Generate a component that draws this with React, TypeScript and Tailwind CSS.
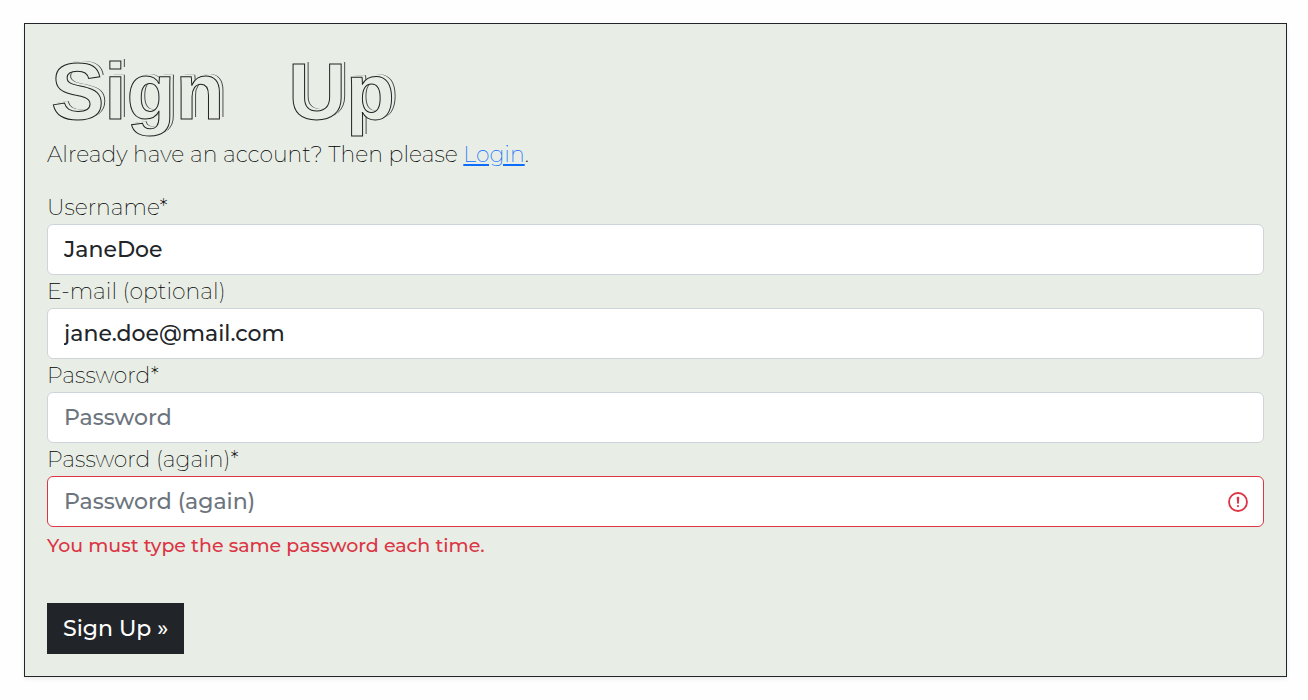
import { useState } from "react";

type FieldProps = {
  id: string;
  label: string;
  type: string;
  initial?: string;
  placeholder?: string;
  error?: string;
};

function AlertIcon() {
  return (
    <svg
      viewBox="0 0 12 12"
      className="pointer-events-none absolute right-[15px] top-1/2 size-[22px] -translate-y-1/2"
      fill="none"
      stroke="#dc3545"
      aria-hidden="true"
    >
      <circle cx="6" cy="6" r="4.9" />
      <path strokeLinejoin="round" d="M5.8 3.6h.4L6 6.5z" />
      <circle cx="6" cy="8.2" r=".6" fill="#dc3545" stroke="none" />
    </svg>
  );
}

function Field({ id, label, type, initial = "", placeholder, error }: FieldProps) {
  const [value, setValue] = useState(initial);
  return (
    <div>
      <label htmlFor={id} className="block text-[22px] leading-[33px] font-extralight text-black">
        {label}
      </label>
      <div className="relative">
        <input
          id={id}
          name={id}
          type={type}
          value={value}
          placeholder={placeholder}
          aria-invalid={error ? true : undefined}
          aria-describedby={error ? `${id}-error` : undefined}
          onChange={(event) => setValue(event.target.value)}
          className={`block w-full rounded-md border bg-white px-4 py-2 text-[22px] leading-[33px] font-medium text-[#212529] placeholder:text-[#6c757d] ${
            error ? "border-[#dc3545]" : "border-[#ced4da]"
          }`}
        />
        {error && <AlertIcon />}
      </div>
      {error && (
        <p id={`${id}-error`} className="mt-1 text-[19px] leading-[30px] font-medium text-[#dc3545]">
          {error}
        </p>
      )}
    </div>
  );
}

export default function App() {
  return (
    <div className="min-h-screen bg-[#fefefe] py-[23px] pr-[21px] pl-6 font-['Montserrat','Inter',sans-serif] text-[#212529]">
      <main className="border border-[#212529] bg-[#e8eee6] p-[22px] shadow-[0_2px_4px_rgba(0,0,0,0.08)]">
        <h1 className="flex h-[92px] gap-16 pl-1 font-['Liberation_Sans',sans-serif] text-[80px] leading-[92px] font-bold text-[#e8eee6] [-webkit-text-stroke:1px_#222] [text-shadow:1px_-1px_0_#e8eee6,2px_-1px_0_#e8eee6,3px_-2px_0_#e8eee6,4px_-2px_0_#444]">
          <span>Sign</span> <span>Up</span>
        </h1>
        <p className="text-[22px] leading-[33px] font-extralight text-black">
          Already have an account? Then please{" "}
          <a href="#login" className="text-[#0d6efd] underline">
            Login
          </a>
          .
        </p>
        <form className="mt-5" onSubmit={(event) => event.preventDefault()}>
          <Field id="username" label="Username*" type="text" initial="JaneDoe" />
          <Field id="email" label="E-mail (optional)" type="email" initial="jane.doe@mail.com" />
          <Field id="password1" label="Password*" type="password" placeholder="Password" />
          <Field
            id="password2"
            label="Password (again)*"
            type="password"
            placeholder="Password (again)"
            error="You must type the same password each time."
          />
          <button
            type="submit"
            className="mt-[42px] block bg-[#212529] px-4 py-[9px] text-[22px] leading-[33px] font-medium text-white"
          >
            Sign Up »
          </button>
        </form>
      </main>
    </div>
  );
}
